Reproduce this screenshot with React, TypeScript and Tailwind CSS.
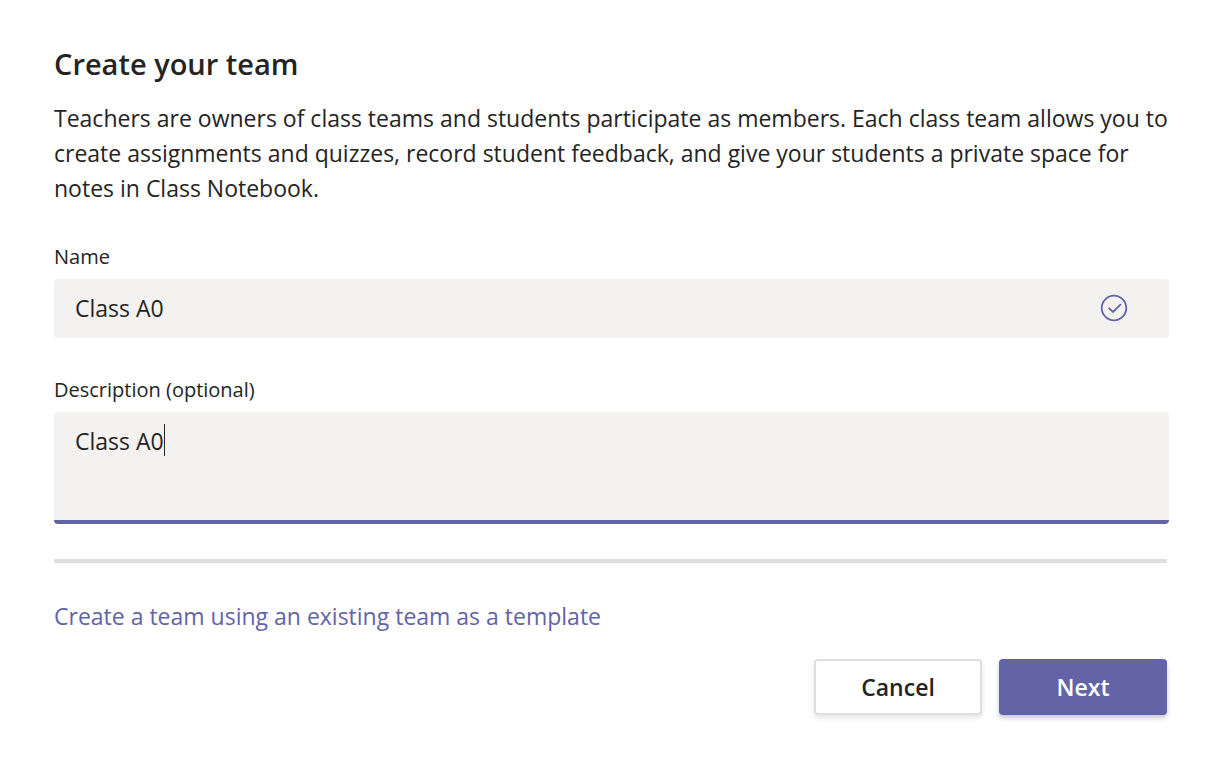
import { useState } from "react";

const font = "font-['Segoe_UI','Open_Sans','Noto_Sans',sans-serif]";

export default function App() {
  const [name, setName] = useState("Class A0");
  const [description, setDescription] = useState("Class A0");
  const [edited, setEdited] = useState(false);

  return (
    <main className={`min-h-screen bg-white pt-[46px] pr-[49px] pb-14 pl-[54px] text-[#252423] ${font}`}>
      <form onSubmit={(e) => e.preventDefault()}>
        <h1 className="text-[29px] leading-9 font-semibold">Create your team</h1>
        <p className="mt-[19px] text-[23px] leading-[35px]">
          Teachers are owners of class teams and students participate as members. Each class team allows you to create
          assignments and quizzes, record student feedback, and give your students a private space for notes in Class
          Notebook.
        </p>

        <label htmlFor="name" className="mt-9 block text-[20px] leading-[30px]">
          Name
        </label>
        <div className="mt-[7px] flex h-[59px] items-center rounded bg-[#f3f2f1] pr-[41px] pb-0.5 pl-[21px]">
          <input
            id="name"
            value={name}
            onChange={(e) => setName(e.target.value)}
            className="min-w-0 flex-1 bg-transparent text-[23px] leading-8 outline-none"
          />
          <svg className="size-7 text-[#6264a7]" viewBox="0 0 28 28" fill="none" stroke="currentColor" strokeWidth="1.8" aria-hidden="true">
            <circle cx="14" cy="14" r="12.3" />
            <path d="M8.6 13.8l4.5 4.2 7.8-7.8" />
          </svg>
        </div>

        <label htmlFor="description" className="mt-[37px] block text-[20px] leading-[30px]">
          Description (optional)
        </label>
        <div className="relative mt-[7px]">
          <textarea
            id="description"
            value={description}
            onFocus={() => setEdited(true)}
            onChange={(e) => setDescription(e.target.value)}
            className="block h-28 w-full resize-none rounded border-b-4 border-[#6264a7] bg-[#f3f2f1] px-[21px] py-3 text-[23px] leading-[34px] outline-none"
          />
          {!edited && (
            <span className="pointer-events-none absolute top-3 left-[110px] h-8 w-px bg-[#252423]" aria-hidden="true" />
          )}
        </div>

        <div className="pr-0.5">
          <hr className="mt-[35px] border-t-4 border-[#dfdedd]" />

          <a href="#template" className="mt-9 inline-block text-[23px] leading-[35px] text-[#6264a7]">
            Create a team using an existing team as a template
          </a>

          <div className="mt-[25px] flex justify-end gap-[17px]">
            <button
              type="button"
              className="h-14 w-[168px] rounded border-2 border-[#e1dfdd] bg-white text-[23px] font-semibold shadow-[0_3px_5px_rgba(0,0,0,0.1)]"
            >
              Cancel
            </button>
            <button
              type="submit"
              className="h-14 w-[168px] rounded bg-[#6264a7] text-[23px] font-semibold text-white shadow-[0_3px_5px_rgba(0,0,0,0.22)]"
            >
              Next
            </button>
          </div>
        </div>
      </form>
    </main>
  );
}
